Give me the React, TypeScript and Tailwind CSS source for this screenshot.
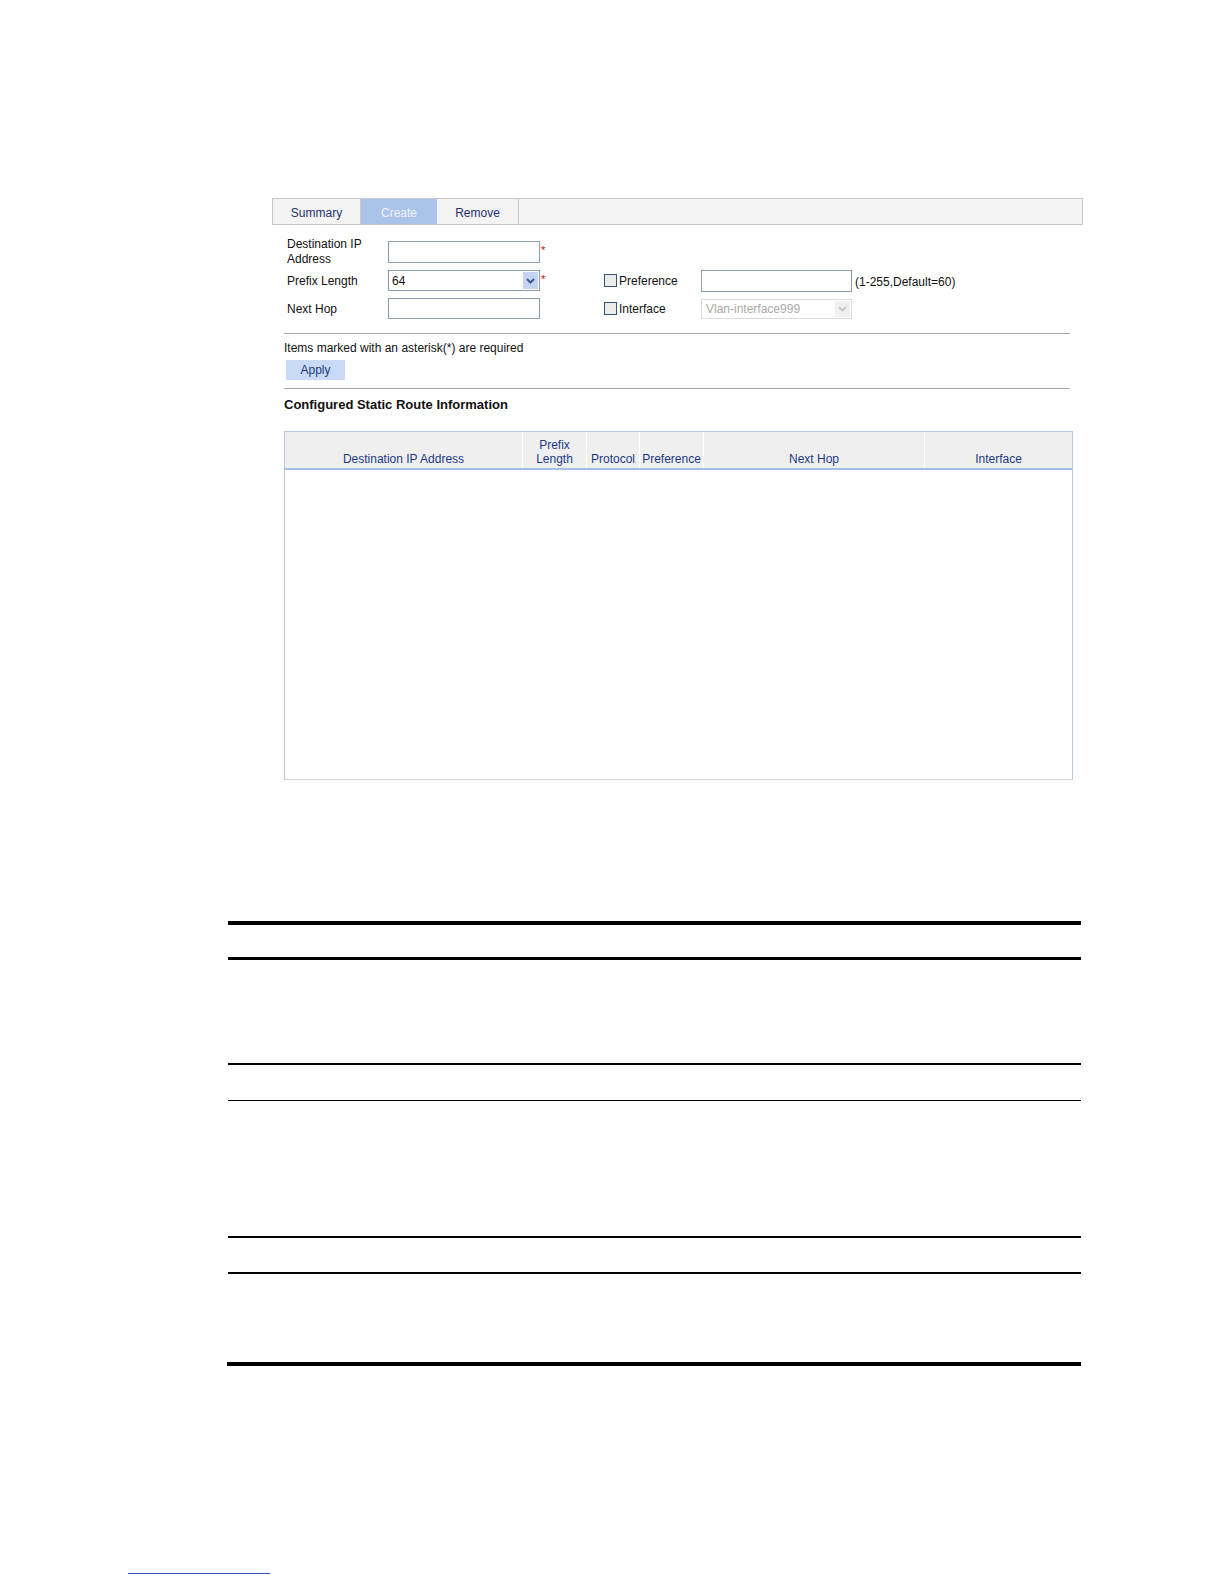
import React from "react";

/**
 * Static route "Create" page, followed by the document's empty table rules.
 */

const columns = [
  { key: "dest", label: ["Destination IP Address"], width: "w-[238px]" },
  { key: "prefix", label: ["Prefix", "Length"], width: "w-[64px]" },
  { key: "proto", label: ["Protocol"], width: "w-[53px]" },
  { key: "pref", label: ["Preference"], width: "w-[64px]" },
  { key: "hop", label: ["Next Hop"], width: "w-[221px]" },
  { key: "iface", label: ["Interface"], width: "flex-1" },
];

function Chevron({ color }: { color: string }) {
  return (
    <svg width="9" height="6" viewBox="0 0 9 6" aria-hidden="true">
      <path d="M1 1l3.5 3.5L8 1" fill="none" stroke={color} strokeWidth={2} />
    </svg>
  );
}

function Checkbox() {
  return <span className="w-[13px] h-[13px] border border-[#2f5578] bg-[#ecece6] shrink-0" />;
}

function Asterisk() {
  return <span className="text-[#d40000] text-[11px] leading-none ml-[1px] -mt-[3px]">*</span>;
}

export default function App(): React.ReactElement {
  return (
    <div className="w-[1224px] h-[1584px] bg-white text-[12px] text-[#111] font-['Liberation_Sans',Arial,sans-serif] overflow-hidden">
      {/* Tab bar */}
      <div className="pt-[198px] pl-[272px]">
        <div className="w-[811px] h-[27px] flex border border-[#c8c8c8] bg-[#f3f3f3]">
          <div className="w-[88px] flex items-center justify-center border-r border-[#c8c8c8] text-[#1f3170] pt-[2px]">
            Summary
          </div>
          <div className="w-[76px] flex items-center justify-center bg-[#a9c3ea] text-[#eef3fb] pt-[2px]">
            Create
          </div>
          <div className="w-[82px] flex items-center justify-center border-r border-[#c8c8c8] text-[#1f3170] pt-[2px]">
            Remove
          </div>
        </div>
      </div>

      {/* Form */}
      <div className="pl-[287px] pt-[12px]">
        <div className="h-[29px] flex items-center">
          <div className="w-[101px] leading-[15px]">
            Destination IP
            <br />
            Address
          </div>
          <div className="w-[216px] flex items-center">
            <div className="w-[152px] h-[22px] border border-[#8c9db3] bg-white" />
            <Asterisk />
          </div>
        </div>

        <div className="h-[29px] flex items-center">
          <div className="w-[101px]">Prefix Length</div>
          <div className="w-[216px] flex items-center">
            <div className="w-[152px] h-[21px] border border-[#8c9db3] bg-white flex items-center justify-between pl-[3px] pr-[1px]">
              <span>64</span>
              <span className="w-[15px] h-[17px] bg-[#c3d5f1] flex items-center justify-center">
                <Chevron color="#3b5a91" />
              </span>
            </div>
            <Asterisk />
          </div>
          <div className="w-[97px] flex items-center">
            <Checkbox />
            <span className="ml-[2px]">Preference</span>
          </div>
          <div className="w-[151px] h-[22px] border border-[#8c9db3] bg-white" />
          <span className="ml-[3px] mt-[3px]">(1-255,Default=60)</span>
        </div>

        <div className="h-[27px] flex items-center">
          <div className="w-[101px]">Next Hop</div>
          <div className="w-[216px] flex items-center">
            <div className="w-[152px] h-[21px] border border-[#8c9db3] bg-white" />
          </div>
          <div className="w-[97px] flex items-center">
            <Checkbox />
            <span className="ml-[2px] mt-[1px]">Interface</span>
          </div>
          <div className="w-[151px] h-[20px] border border-[#dcdcdc] bg-white flex items-center justify-between pl-[4px] pr-[1px] text-[#a9a9a9]">
            <span>Vlan-interface999</span>
            <span className="w-[15px] h-[16px] bg-[#f0f0f0] flex items-center justify-center">
              <Chevron color="#c8c8c8" />
            </span>
          </div>
        </div>
      </div>

      {/* Apply section */}
      <div className="pl-[284px] pt-[11px]">
        <div className="w-[786px] border-t border-[#a9a9a2]" />
        <div className="pt-[7px] leading-[15px]">Items marked with an asterisk(*) are required</div>
        <div className="ml-[2px] mt-[4px] w-[59px] h-[20px] bg-[#c8daf5] text-[#22397a] flex items-center justify-center">
          Apply
        </div>
        <div className="mt-[8px] w-[786px] border-t border-[#a9a9a2]" />
        <div className="pt-[8px] text-[13px] font-bold leading-[16px]">Configured Static Route Information</div>
      </div>

      {/* Static route table */}
      <div className="pl-[284px] pt-[18px]">
        <div className="w-[789px] h-[349px] flex flex-col border border-t-[#b7c8e6] border-l-[#b7c8e6] border-r-[#b7c8e6] border-b-[#cfcfcf]">
          <div className="h-[38px] flex bg-[#efefef] border-b-2 border-[#a8bfe4] text-[#1c3a84]">
            {columns.map((col, i) => (
              <div
                key={col.key}
                className={`${col.width} flex flex-col items-center justify-end pb-[2px] leading-[14px] ${
                  i < columns.length - 1 ? "border-r border-white" : ""
                }`}
              >
                {col.label.map((line) => (
                  <span key={line}>{line}</span>
                ))}
              </div>
            ))}
          </div>
          <div className="flex-1 bg-white" />
        </div>
      </div>

      {/* Document table rules */}
      <div className="pl-[228px] pt-[141px]">
        <div className="w-[853px] h-[4px] bg-black" />
        <div className="mt-[32px] w-[853px] h-[3px] bg-black" />
        <div className="mt-[103px] w-[853px] h-[1.5px] bg-black" />
        <div className="mt-[35px] w-[853px] h-[1.5px] bg-black" />
        <div className="mt-[135px] w-[853px] h-[1.5px] bg-black" />
        <div className="mt-[34.5px] w-[853px] h-[1.5px] bg-black" />
        <div className="mt-[88.5px] -ml-[1px] w-[854px] h-[4px] bg-black" />
      </div>

      {/* Footer link underline */}
      <div className="pl-[128px] pt-[207px]">
        <div className="w-[142px] h-[1px] bg-[#2f4fd0]" />
      </div>
    </div>
  );
}
